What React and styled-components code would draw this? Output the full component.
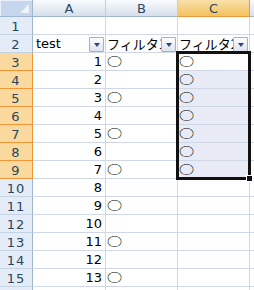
import styled, { createGlobalStyle, css } from "styled-components";

const GlobalStyle = createGlobalStyle`
  html, body {
    margin: 0;
    padding: 0;
    background: #ffffff;
    overflow: hidden;
  }
  * {
    box-sizing: border-box;
  }
`;

// every part of the grid is placed at its own row and column,
// so the selection frame can share the same area
const place = css`
  grid-row: ${(p) => p.$row};
  grid-column: ${(p) => p.$col};
`;

const Sheet = styled.div`
  display: grid;
  grid-template-columns: 33px 73px 72px 72px 1fr;
  grid-template-rows: 17px repeat(16, 18px);
  width: 254px;
  height: 290px;
  overflow: hidden;
  font-family: "DejaVu Sans", "Noto Sans CJK JP", sans-serif;
`;

const Corner = styled.div`
  ${place};
  position: relative;
  background: #c6d6ec;
  border-right: 1px solid #9eb6ce;
  border-bottom: 1px solid #9eb6ce;
  box-shadow: inset 1px 1px 0 #e9f0f9;
  &::after {
    content: "";
    position: absolute;
    right: 3px;
    bottom: 3px;
    width: 0;
    height: 0;
    border-left: 9px solid transparent;
    border-bottom: 9px solid #eef3f9;
  }
`;

const ColHeader = styled.div`
  ${place};
  display: flex;
  align-items: center;
  justify-content: center;
  font-size: 13px;
  color: #2a4660;
  background: ${(p) =>
    p.$selected
      ? "linear-gradient(#fae0aa, #f1c25f)"
      : "linear-gradient(#f9fbfd, #d6dfeb)"};
  border-right: 1px solid ${(p) => (p.$selected ? "#f29536" : "#c0cee0")};
  border-bottom: 1px solid ${(p) => (p.$selected ? "#f29536" : "#9eb6ce")};
  padding-top: 1px;
`;

const RowHeader = styled.div`
  ${place};
  display: flex;
  align-items: center;
  justify-content: center;
  font-size: 13px;
  letter-spacing: 1px;
  color: #2a4660;
  background: ${(p) => (p.$selected ? "#f9d99d" : "#e4ecf7")};
  border-right: 1px solid ${(p) => (p.$selected ? "#f29536" : "#9eb6ce")};
  border-bottom: 1px solid ${(p) => (p.$selected ? "#f29536" : "#c5d3e5")};
  padding-top: 1px;
`;

const Cell = styled.div`
  ${place};
  position: relative;
  display: flex;
  align-items: flex-end;
  justify-content: ${(p) => (p.$align === "right" ? "flex-end" : "flex-start")};
  padding: 0 3px 1px 1px;
  font-size: 13px;
  line-height: 15px;
  color: #000000;
  white-space: nowrap;
  overflow: hidden;
  background: ${(p) => (p.$sel ? "#e8ebf5" : "#ffffff")};
  border-right: 1px solid #d0d7e5;
  border-bottom: 1px solid #d0d7e5;
`;

const HeadText = styled.span`
  padding-left: ${(p) => (p.$latin ? "2px" : "0")};
  font-family: ${(p) =>
    p.$latin ? '"DejaVu Sans", sans-serif' : '"Noto Sans CJK JP", sans-serif'};
`;

const Mark = styled.span`
  display: inline-block;
  font-family: "Noto Sans CJK JP", sans-serif;
  font-size: 14px;
  line-height: 15px;
  transform: scale(1.08, 0.78);
  transform-origin: left center;
`;

const FilterButton = styled.div`
  position: absolute;
  right: 1px;
  bottom: 0;
  width: 15px;
  height: 15px;
  border: 1px solid #9fb2cc;
  border-radius: 1px;
  background: linear-gradient(#fdfdfe, #dde4ee);
  display: flex;
  align-items: center;
  justify-content: center;
  &::after {
    content: "";
    width: 0;
    height: 0;
    border-left: 3px solid transparent;
    border-right: 3px solid transparent;
    border-top: 4px solid #2f437a;
    margin-top: 1px;
  }
`;

const Selection = styled.div`
  grid-column: 4;
  grid-row: 4 / 11;
  margin: -2px -1px -1px -2px;
  border: 3px solid #111111;
  position: relative;
  pointer-events: none;
`;

const FillHandle = styled.div`
  position: absolute;
  right: -5px;
  bottom: -5px;
  width: 7px;
  height: 7px;
  background: #111111;
  border: 1px solid #ffffff;
`;

const COLS = ["A", "B", "C"];
const ROW_COUNT = 16;
// row 16 only shows a sliver at the bottom edge, its contents are below the fold
const LAST_FULL_ROW = 15;

function cellContent(row, col) {
  if (row > LAST_FULL_ROW) return null;
  if (row === 2) {
    if (col === "A") return { text: "test", latin: true, head: true };
    if (col === "B") return { text: "フィルタ1", head: true };
    return { text: "フィルタ2", head: true };
  }
  if (row < 3) return null;
  const n = row - 2;
  if (col === "A") return { num: n };
  if (col === "B") return n % 2 === 1 ? { mark: true } : null;
  if (col === "C") return row <= 9 ? { mark: true } : null;
  return null;
}

export default function App() {
  const rows = Array.from({ length: ROW_COUNT }, (_, i) => i + 1);
  return (
    <>
      <GlobalStyle />
      <Sheet>
        <Corner $row={1} $col={1} />
        {COLS.map((c, i) => (
          <ColHeader key={c} $row={1} $col={i + 2} $selected={c === "C"}>
            {c}
          </ColHeader>
        ))}
        <ColHeader $row={1} $col={5} />
        {rows.map((r) => {
          const selRow = r >= 3 && r <= 9;
          return [
            <RowHeader key={`h${r}`} $row={r + 1} $col={1} $selected={selRow}>
              {r <= LAST_FULL_ROW ? r : null}
            </RowHeader>,
            ...COLS.map((c, i) => {
              const v = cellContent(r, c);
              const sel = c === "C" && r >= 4 && r <= 9;
              return (
                <Cell
                  key={`${c}${r}`}
                  $row={r + 1}
                  $col={i + 2}
                  $align={v && v.num ? "right" : "left"}
                  $sel={sel}
                >
                  {v && v.head && <HeadText $latin={v.latin}>{v.text}</HeadText>}
                  {v && v.num && v.num}
                  {v && v.mark && <Mark>○</Mark>}
                  {v && v.head && <FilterButton />}
                </Cell>
              );
            }),
            <Cell key={`D${r}`} $row={r + 1} $col={5} />,
          ];
        })}
        <Selection>
          <FillHandle />
        </Selection>
      </Sheet>
    </>
  );
}
